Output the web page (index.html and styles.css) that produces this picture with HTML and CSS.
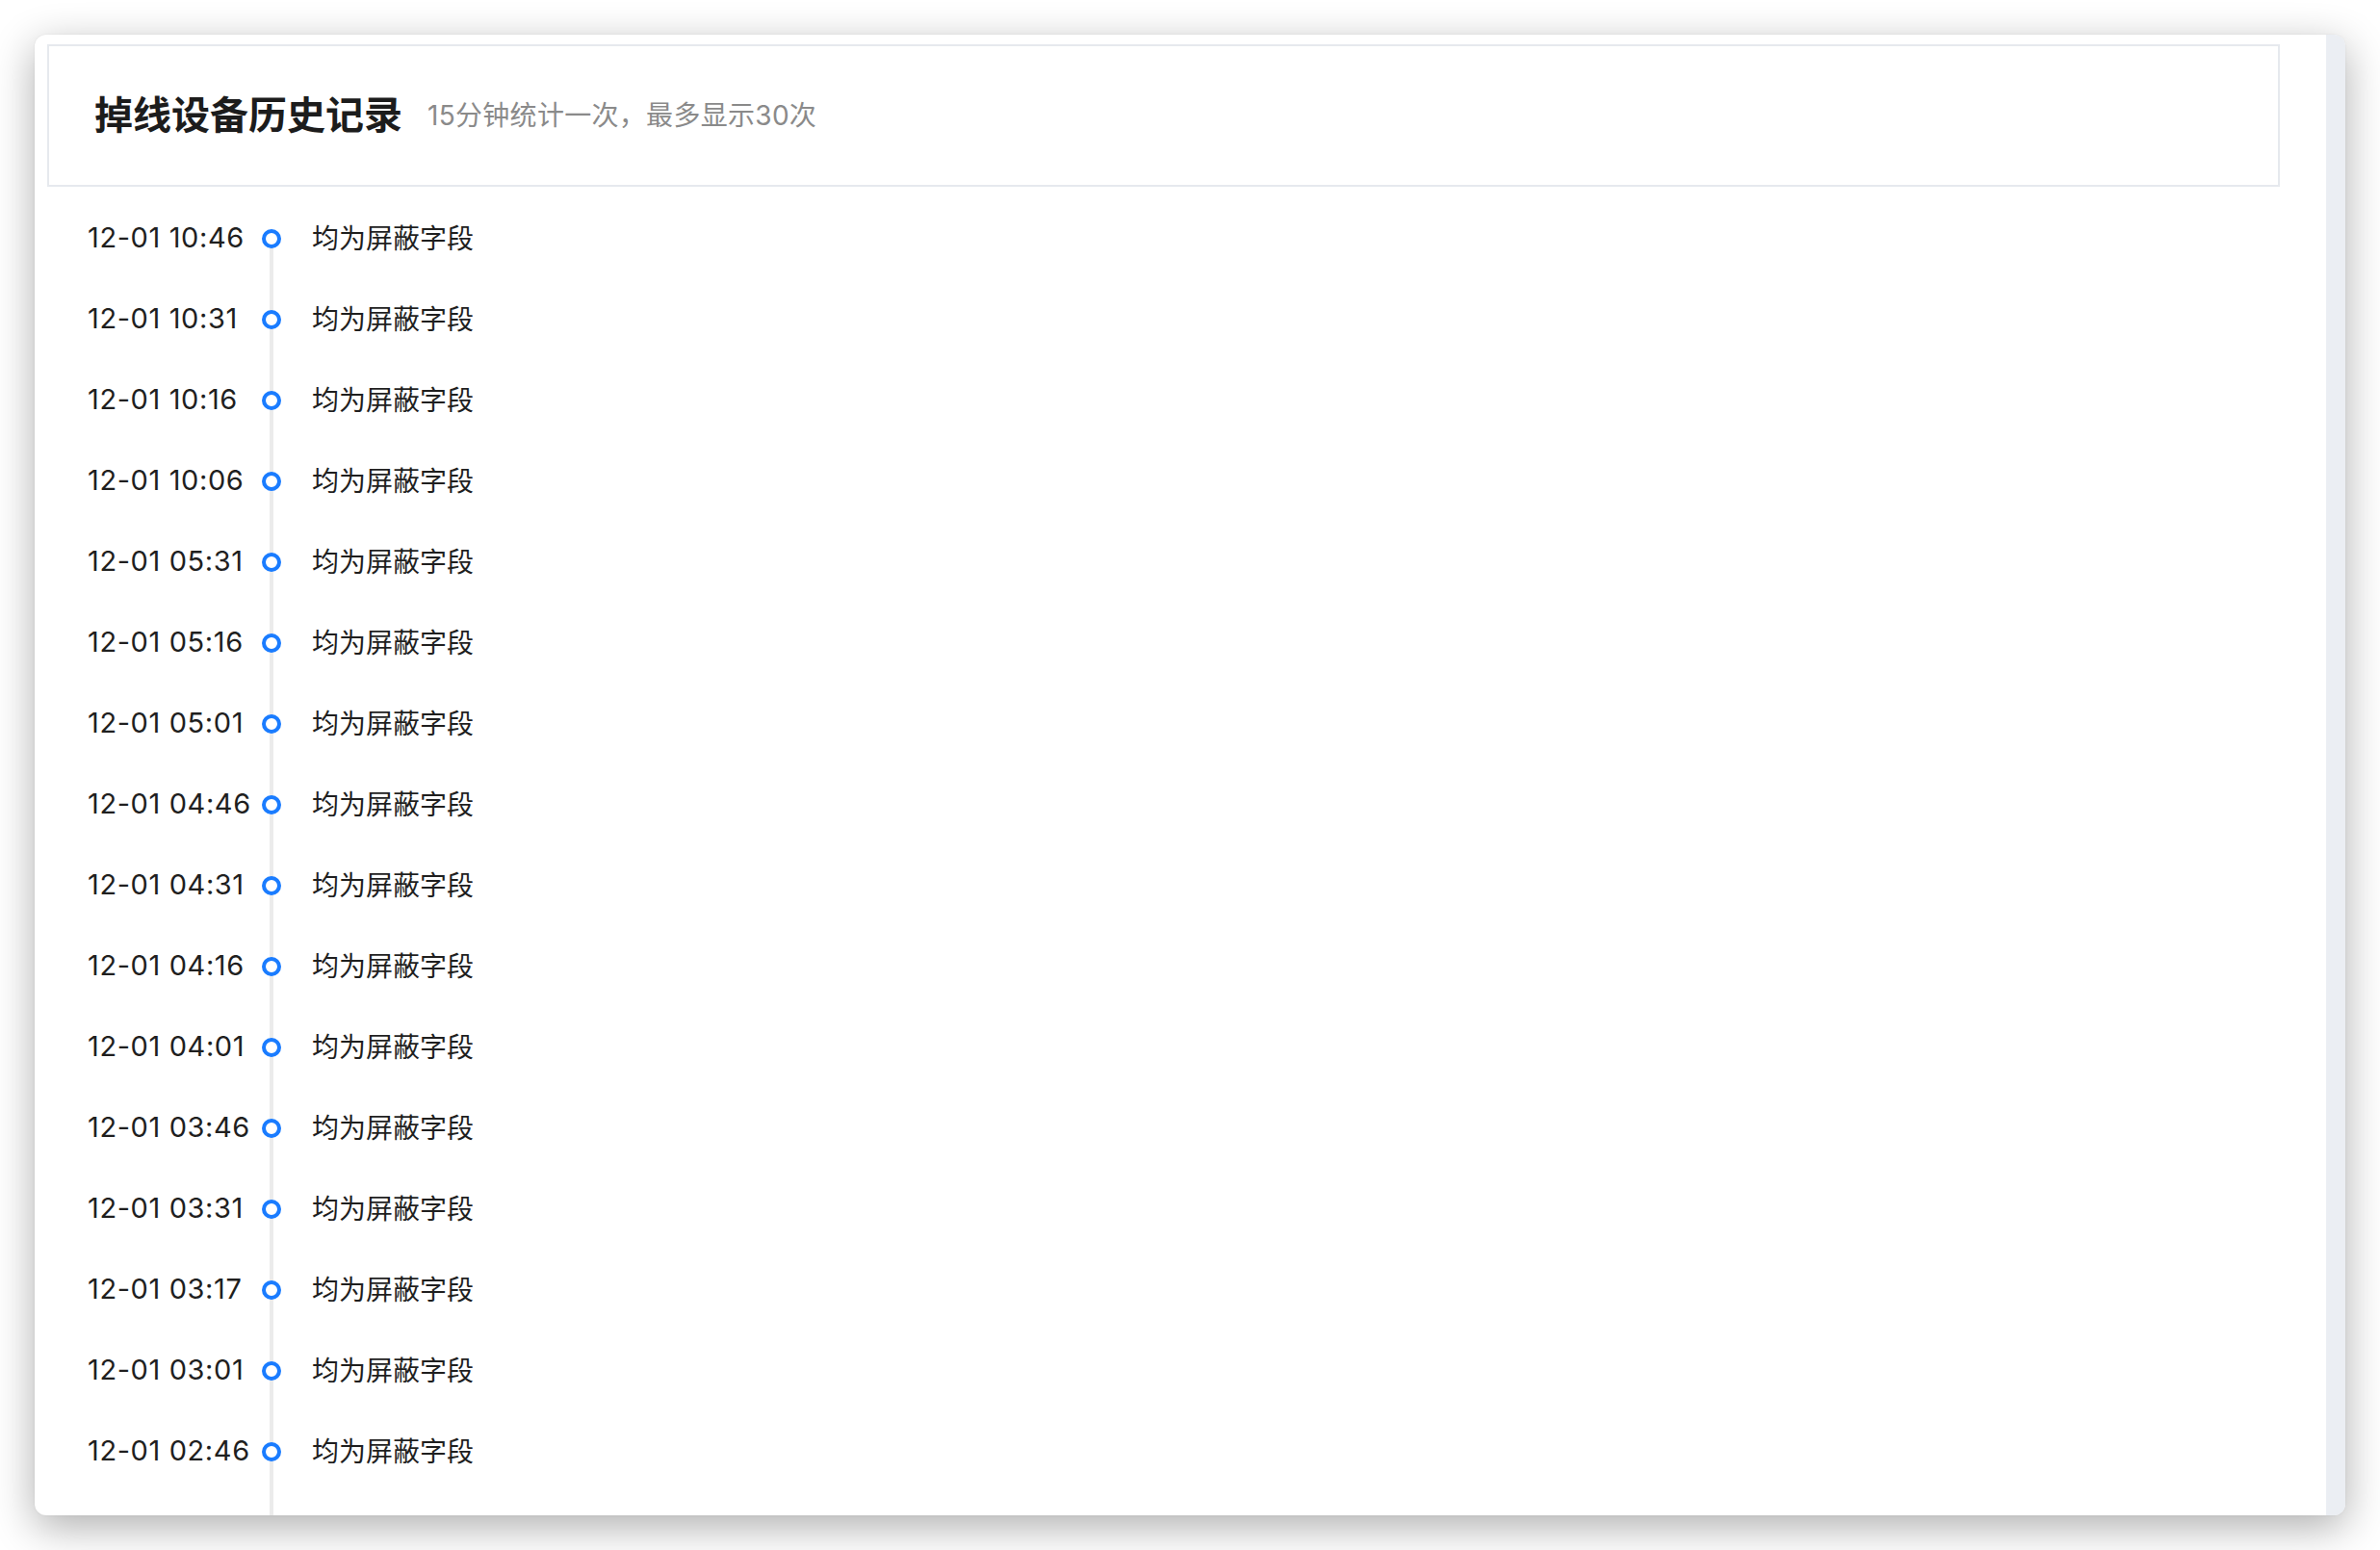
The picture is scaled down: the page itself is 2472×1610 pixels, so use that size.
FILE: index.html
```html
<!DOCTYPE html>
<html lang="zh-CN">
<head>
<meta charset="utf-8">
<title>掉线设备历史记录</title>
<link rel="stylesheet" href="styles.css">
</head>
<body>
<div class="window">
  <div class="main">
    <div class="header">
      <span class="title">掉线设备历史记录</span>
      <span class="subtitle">15分钟统计一次，最多显示30次</span>
    </div>
    <ul class="timeline">
      <li class="item"><span class="time">12-01 10:46</span><span class="dot"></span><span class="content">均为屏蔽字段</span></li>
      <li class="item"><span class="time">12-01 10:31</span><span class="dot"></span><span class="content">均为屏蔽字段</span></li>
      <li class="item"><span class="time">12-01 10:16</span><span class="dot"></span><span class="content">均为屏蔽字段</span></li>
      <li class="item"><span class="time">12-01 10:06</span><span class="dot"></span><span class="content">均为屏蔽字段</span></li>
      <li class="item"><span class="time">12-01 05:31</span><span class="dot"></span><span class="content">均为屏蔽字段</span></li>
      <li class="item"><span class="time">12-01 05:16</span><span class="dot"></span><span class="content">均为屏蔽字段</span></li>
      <li class="item"><span class="time">12-01 05:01</span><span class="dot"></span><span class="content">均为屏蔽字段</span></li>
      <li class="item"><span class="time">12-01 04:46</span><span class="dot"></span><span class="content">均为屏蔽字段</span></li>
      <li class="item"><span class="time">12-01 04:31</span><span class="dot"></span><span class="content">均为屏蔽字段</span></li>
      <li class="item"><span class="time">12-01 04:16</span><span class="dot"></span><span class="content">均为屏蔽字段</span></li>
      <li class="item"><span class="time">12-01 04:01</span><span class="dot"></span><span class="content">均为屏蔽字段</span></li>
      <li class="item"><span class="time">12-01 03:46</span><span class="dot"></span><span class="content">均为屏蔽字段</span></li>
      <li class="item"><span class="time">12-01 03:31</span><span class="dot"></span><span class="content">均为屏蔽字段</span></li>
      <li class="item"><span class="time">12-01 03:17</span><span class="dot"></span><span class="content">均为屏蔽字段</span></li>
      <li class="item"><span class="time">12-01 03:01</span><span class="dot"></span><span class="content">均为屏蔽字段</span></li>
      <li class="item"><span class="time">12-01 02:46</span><span class="dot"></span><span class="content">均为屏蔽字段</span></li>
    </ul>
  </div>
  <div class="scrollbar"></div>
</div>
</body>
</html>
```
FILE: styles.css
```css
* {
  box-sizing: border-box;
}

html,
body {
  margin: 0;
  padding: 0;
  background: #ffffff;
}

body {
  padding: 36px;
  font-family: Inter, "Noto Sans CJK SC", sans-serif;
  color: #1f1f1f;
}

.window {
  width: 2400px;
  height: 1538px;
  display: flex;
  background: #ffffff;
  border-radius: 12px;
  overflow: hidden;
  box-shadow: 0 12px 44px rgba(0, 0, 0, 0.32), 0 0 2px rgba(0, 0, 0, 0.08);
}

.main {
  flex: 1;
  padding: 10px 48px 0 13px;
  overflow: hidden;
}

.scrollbar {
  width: 20px;
  background: #ebeef3;
}

.header {
  height: 148px;
  border: 2px solid #e6e9ee;
  display: flex;
  align-items: center;
  padding-left: 47px;
  padding-bottom: 6px;
}

.title {
  font-size: 40px;
  font-weight: 700;
  color: #1c1c1c;
  font-family: "Noto Sans CJK SC", sans-serif;
}

.subtitle {
  margin-left: 26px;
  font-size: 28px;
  color: #8a8a8a;
  letter-spacing: 0.3px;
  margin-top: 2px;
}

.timeline {
  list-style: none;
  margin: 10px 0 0 42px;
  padding: 0;
  position: relative;
}

.timeline::before {
  content: "";
  position: absolute;
  left: 189px;
  top: 44px;
  bottom: -60px;
  width: 4px;
  background: #ebebeb;
}

.item {
  height: 84px;
  display: flex;
  align-items: center;
  font-size: 28px;
}

.time {
  width: 181px;
  font-size: 29px;
  letter-spacing: 0.6px;
  color: #1f1f1f;
}

.dot {
  position: relative;
  width: 20px;
  height: 20px;
  border: 4px solid #1a7cff;
  border-radius: 50%;
  background: #ffffff;
  margin-top: 4px;
}

.content {
  margin-left: 32px;
  color: #1f1f1f;
  font-family: "Noto Sans CJK SC", sans-serif;
}
```
